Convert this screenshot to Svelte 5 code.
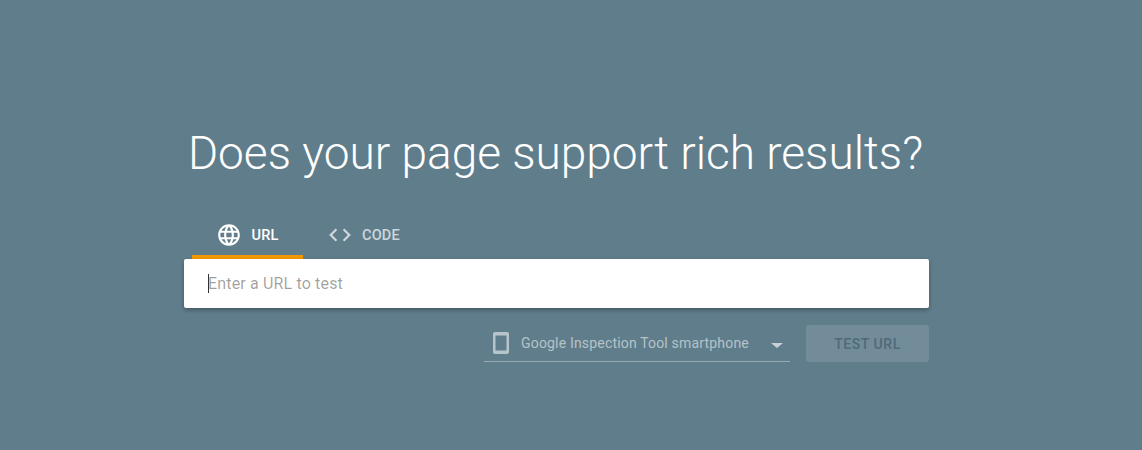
<script>
  const title = 'Does your page support rich results?';
</script>

<main class="page">
  <div class="wrap">
    <h1>{title}</h1>
    <div class="tabs">
      <div class="tab active">
        <svg width="26" height="26" viewBox="0 0 24 24"><path fill="currentColor" d="M11.99 2C6.47 2 2 6.48 2 12s4.47 10 9.99 10C17.52 22 22 17.52 22 12S17.52 2 11.99 2zm6.93 6h-2.95c-.32-1.25-.78-2.45-1.38-3.56 1.84.63 3.37 1.91 4.33 3.56zM12 4.04c.83 1.2 1.48 2.53 1.91 3.96h-3.82c.43-1.43 1.08-2.76 1.91-3.96zM4.26 14C4.1 13.36 4 12.69 4 12s.1-1.36.26-2h3.38c-.08.66-.14 1.32-.14 2 0 .68.06 1.34.14 2H4.26zm.82 2h2.95c.32 1.25.78 2.45 1.38 3.56-1.84-.63-3.37-1.9-4.33-3.56zm2.95-8H5.08c.96-1.66 2.49-2.93 4.33-3.56C8.81 5.55 8.35 6.75 8.03 8zM12 19.96c-.83-1.2-1.48-2.53-1.91-3.96h3.82c-.43 1.43-1.08 2.76-1.91 3.96zM14.34 14H9.66c-.09-.66-.16-1.32-.16-2 0-.68.07-1.35.16-2h4.68c.09.65.16 1.32.16 2 0 .68-.07 1.34-.16 2zm.25 5.56c.6-1.11 1.06-2.31 1.38-3.56h2.95c-.96 1.65-2.49 2.93-4.33 3.56zM16.36 14c.08-.66.14-1.32.14-2 0-.68-.06-1.34-.14-2h3.38c.16.64.26 1.31.26 2s-.1 1.36-.26 2h-3.38z"/></svg>
        <span>URL</span>
      </div>
      <div class="tab">
        <svg width="26" height="26" viewBox="0 0 24 24"><path fill="currentColor" d="M9.4 16.6 4.8 12l4.6-4.6L8 6l-6 6 6 6 1.4-1.4zm5.2 0 4.600-4.600-4.600-4.600L16 6l6 6-6 6-1.400-1.400z"/></svg>
        <span>CODE</span>
      </div>
    </div>
    <div class="input">
      <span class="caret"></span>
      <span class="placeholder">Enter a URL to test</span>
    </div>
    <div class="actions">
      <div class="select">
        <svg class="phone" width="18" height="24" viewBox="0 0 18 24"><path fill="currentColor" fill-rule="evenodd" d="M3 1h12c1.100 0 2 .9 2 2v18c0 1.100-.9 2-2 2H3c-1.100 0-2-.9-2-2V3c0-1.100.9-2 2-2zM3.500 4.500v15h11v-15h-11z"/></svg>
        <span class="label">Google Inspection Tool smartphone</span>
        <span class="arrow"></span>
      </div>
      <div class="btn">TEST URL</div>
    </div>
  </div>
</main>

<style>
  :global(body) {
    margin: 0;
    background: #607d8b;
  }
  .page {
    height: 450px;
    overflow: hidden;
    font-family: Roboto, "Liberation Sans", sans-serif;
    display: flex;
    padding-left: 184px;
  }
  .wrap {
    width: 745px;
    display: flex;
    flex-direction: column;
  }
  h1 {
    margin: 124px 0 0 -2px;
    font-size: 46px;
    font-weight: 300;
    line-height: 58px;
    color: #fff;
    text-align: center;
    white-space: nowrap;
  }
  .tabs {
    display: flex;
    margin: 29px 0 0 8px;
    height: 48px;
  }
  .tab {
    display: flex;
    align-items: center;
    justify-content: center;
    gap: 9px;
    box-sizing: border-box;
    height: 48px;
    width: 111px;
    font-size: 14.5px;
    font-weight: 500;
    letter-spacing: 0.2px;
    color: rgba(255, 255, 255, 0.7);
  }
  .tab.active {
    color: #fff;
    box-shadow: inset 0 -4px 0 #f29900;
  }
  .tab + .tab {
    width: auto;
    margin-left: 24px;
  }
  .input {
    height: 49px;
    background: #fff;
    border-radius: 2px;
    box-shadow: 0 2px 4px rgba(0, 0, 0, 0.3);
    display: flex;
    align-items: center;
    padding-left: 24px;
    box-sizing: border-box;
    position: relative;
  }
  .caret {
    width: 1px;
    height: 19px;
    background: #333;
  }
  .placeholder {
    font-size: 16px;
    letter-spacing: 0.16px;
    margin-left: -1px;
    color: rgba(0, 0, 0, 0.38);
  }
  .actions {
    display: flex;
    justify-content: flex-end;
    align-items: flex-start;
    margin-top: 17px;
    gap: 16px;
  }
  .select {
    width: 306px;
    height: 37px;
    box-sizing: border-box;
    border-bottom: 1px solid rgba(255, 255, 255, 0.35);
    display: flex;
    align-items: center;
    padding-left: 8px;
    color: rgba(255, 255, 255, 0.55);
    position: relative;
  }
  .phone {
    color: rgba(255, 255, 255, 0.55);
  }
  .label {
    font-size: 14px;
    letter-spacing: 0.18px;
    margin-left: 11px;
    white-space: nowrap;
  }
  .arrow {
    position: absolute;
    left: 287px;
    top: 18px;
    border-left: 6px solid transparent;
    border-right: 6px solid transparent;
    border-top: 5px solid rgba(255, 255, 255, 0.65);
  }
  .btn {
    width: 123px;
    height: 37px;
    background: rgba(255, 255, 255, 0.12);
    border-radius: 3px;
    display: flex;
    align-items: center;
    justify-content: center;
    font-size: 14px;
    font-weight: 500;
    letter-spacing: 0.55px;
    color: #4f6a78;
  }
</style>
